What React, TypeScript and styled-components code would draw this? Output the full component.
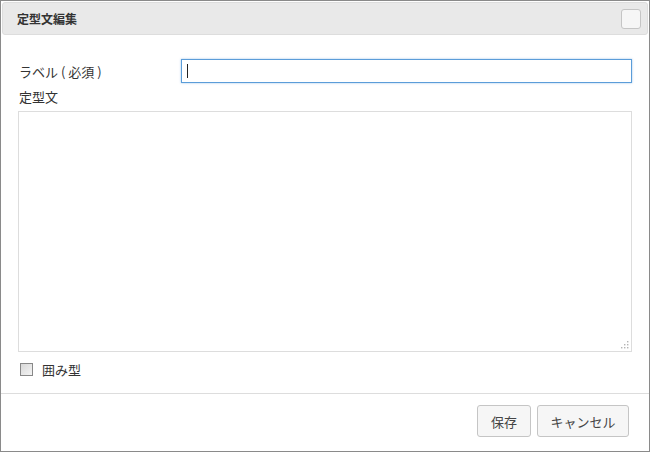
import React from "react";
import styled, { createGlobalStyle } from "styled-components";

const GlobalStyle = createGlobalStyle`
  html, body {
    margin: 0;
    padding: 0;
    background: #ffffff;
  }
  body {
    font-family: "Segoe UI", "Noto Sans CJK JP", "Noto Sans", sans-serif;
    font-size: 13px;
    color: #333333;
  }
`;

const Dialog = styled.div`
  box-sizing: border-box;
  width: 650px;
  height: 452px;
  border: 1px solid #8a8a8a;
  background: #ffffff;
  display: flex;
  flex-direction: column;
`;

const TitleBar = styled.div`
  box-sizing: border-box;
  margin: 1px 1px 0 1px;
  height: 33px;
  background: #e9e9e9;
  border: 1px solid #dddddd;
  border-radius: 3px;
  display: flex;
  align-items: center;
  justify-content: space-between;
  padding: 0 6px 0 14px;
`;

const Title = styled.span`
  font-weight: bold;
  font-size: 12px;
  color: #333333;
`;

const CloseButton = styled.button`
  box-sizing: border-box;
  width: 20px;
  height: 20px;
  padding: 0;
  border: 1px solid #c5c5c5;
  border-radius: 3px;
  background: #f6f6f6;
`;

const Content = styled.div`
  flex: 1;
  display: flex;
  flex-direction: column;
  padding: 24px 17px 0 17px;
`;

const FieldRow = styled.div`
  display: flex;
  align-items: center;
`;

const Label = styled.label<{ $width?: number }>`
  width: ${(p) => (p.$width ? `${p.$width}px` : "auto")};
  flex-shrink: 0;
  font-size: 13px;
  color: #333333;
  padding-left: 1px;
`;

const TextInput = styled.div`
  box-sizing: border-box;
  flex: 1;
  height: 24px;
  border: 1px solid #5b9dd9;
  box-shadow: 0 0 2px rgba(91, 157, 217, 0.6);
  display: flex;
  align-items: center;
  padding-left: 5px;
`;

const Caret = styled.span`
  width: 1px;
  height: 14px;
  background: #222222;
`;

const TextLabelRow = styled.div`
  margin-top: 4px;
  height: 18px;
  display: flex;
  align-items: center;
`;

const TextArea = styled.div`
  position: relative;
  box-sizing: border-box;
  margin-top: 6px;
  width: 614px;
  height: 241px;
  border: 1px solid #dddddd;
`;

const Grip = styled.svg`
  position: absolute;
  right: 2px;
  bottom: 2px;
`;

const CheckRow = styled.div`
  display: flex;
  align-items: center;
  margin-top: 10px;
  padding-left: 2px;
  height: 14px;
`;

const Checkbox = styled.span`
  box-sizing: border-box;
  width: 13px;
  height: 13px;
  border: 1px solid #888888;
  background: linear-gradient(135deg, #d8d8d8, #f4f4f4);
  margin-right: 8px;
`;

const Footer = styled.div`
  box-sizing: border-box;
  border-top: 1px solid #dddddd;
  height: 58px;
  display: flex;
  justify-content: flex-end;
  align-items: flex-start;
  gap: 6px;
  padding: 11px 20px 0 0;
`;

const Button = styled.button<{ $width: number }>`
  box-sizing: border-box;
  width: ${(p) => p.$width}px;
  height: 32px;
  border: 1px solid #c5c5c5;
  border-radius: 3px;
  background: #f6f6f6;
  font-family: inherit;
  font-size: 13px;
  color: #454545;
  padding: 0;
`;

export default function App() {
  return (
    <>
      <GlobalStyle />
      <Dialog>
        <TitleBar>
          <Title>定型文編集</Title>
          <CloseButton aria-label="close" />
        </TitleBar>
        <Content>
          <FieldRow>
            <Label $width={162}>ラベル ( 必須 )</Label>
            <TextInput>
              <Caret />
            </TextInput>
          </FieldRow>
          <TextLabelRow>
            <Label>定型文</Label>
          </TextLabelRow>
          <TextArea>
            <Grip width="9" height="9" viewBox="0 0 9 9">
              <g fill="#b5b5b5">
                <rect x="7" y="1" width="1.4" height="1.4" />
                <rect x="4" y="4" width="1.4" height="1.4" />
                <rect x="7" y="4" width="1.4" height="1.4" />
                <rect x="1" y="7" width="1.4" height="1.4" />
                <rect x="4" y="7" width="1.4" height="1.4" />
                <rect x="7" y="7" width="1.4" height="1.4" />
              </g>
            </Grip>
          </TextArea>
          <CheckRow>
            <Checkbox />
            <Label>囲み型</Label>
          </CheckRow>
        </Content>
        <Footer>
          <Button $width={54}>保存</Button>
          <Button $width={92}>キャンセル</Button>
        </Footer>
      </Dialog>
    </>
  );
}
